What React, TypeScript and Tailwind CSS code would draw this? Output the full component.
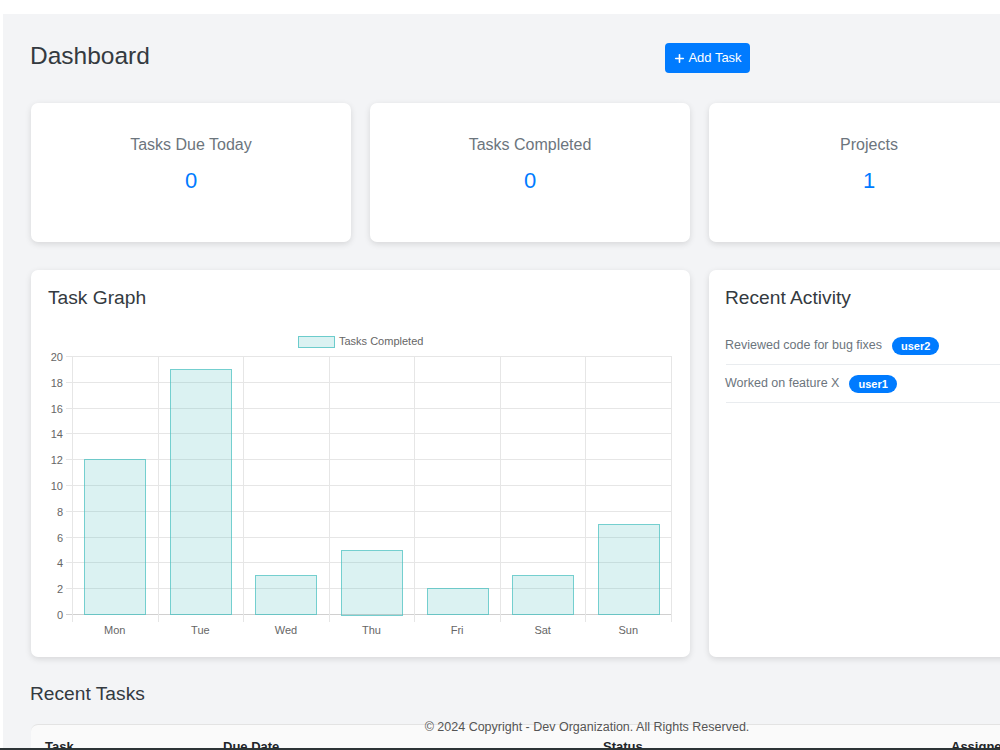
import { Plus } from "lucide-react";

const stats = [
  { title: "Tasks Due Today", value: 0 },
  { title: "Tasks Completed", value: 0 },
  { title: "Projects", value: 1 },
];

const days = ["Mon", "Tue", "Wed", "Thu", "Fri", "Sat", "Sun"];
const counts = [12, 19, 3, 5, 2, 3, 7];

const activity = [
  { text: "Reviewed code for bug fixes", user: "user2" },
  { text: "Worked on feature X", user: "user1" },
];

// plot box inside the svg
const left = 41;
const right = 640;
const top = 31;
const bottom = 289;
const step = (right - left) / 7;
const unit = (bottom - top) / 20;

const TaskChart = () => (
  <svg width="659" height="320" className="block">
    <rect x="267.5" y="11.5" width="36" height="11" fill="rgba(75,192,192,0.2)" stroke="rgba(75,192,192,0.8)" />
    <text x="308" y="20" fontSize="11" fill="#666">
      Tasks Completed
    </text>
    {Array.from({ length: 11 }).map((_, k) => {
      const y = Math.round(bottom - k * 2 * unit) + 0.5;
      return (
        <g key={k}>
          <line x1={left - 6} x2={right} y1={y} y2={y} stroke={k === 0 ? "#d0d0d0" : "#e6e6e6"} />
          <text x="32" y={y + 4} fontSize="11" fill="#666" textAnchor="end">
            {k * 2}
          </text>
        </g>
      );
    })}
    {Array.from({ length: 8 }).map((_, i) => {
      const x = Math.round(left + i * step) + 0.5;
      return <line key={i} x1={x} x2={x} y1={top} y2={bottom + 8} stroke="#e6e6e6" />;
    })}
    {counts.map((c, i) => {
      const cx = left + (i + 0.5) * step;
      const h = c * unit;
      return (
        <g key={days[i]}>
          <rect
            x={Math.round(cx - 30.5) + 0.5}
            y={Math.round(bottom - h) + 0.5}
            width="61"
            height={Math.round(h)}
            fill="rgba(75,192,192,0.2)"
            stroke="rgba(75,192,192,0.75)"
          />
          <text x={cx} y="309" fontSize="11" fill="#666" textAnchor="middle">
            {days[i]}
          </text>
        </g>
      );
    })}
  </svg>
);

export default function App() {
  return (
    <div className="relative h-[750px] w-[1000px] overflow-hidden bg-white font-['Liberation_Sans',Arial,sans-serif]">
      <div className="mt-[14px] ml-[3px] w-[1200px] min-h-[800px] bg-[#f3f4f6] pl-[28px] pt-[23px]">
        <div className="flex items-start">
          <h1 className="-ml-[1px] w-[635px] pt-[4px] text-[24.5px] leading-[29px] text-[#343a40]">Dashboard</h1>
          <button
            type="button"
            className="mt-[6px] flex h-[30px] w-[85px] items-center justify-center gap-[2px] rounded-[4px] bg-[#007bff] text-[13px] text-white"
          >
            <Plus size={13} strokeWidth={3} />
            Add Task
          </button>
        </div>

        <div className="mt-[30px] grid grid-cols-[320px_320px_320px] gap-[19px]">
          {stats.map((s) => (
            <div
              key={s.title}
              className="flex h-[139px] flex-col items-center rounded-[7px] bg-white pt-[32px] shadow-[0_2px_6px_rgba(0,0,0,0.12)]"
            >
              <p className="text-[16px] leading-[20px] text-[#6c757d]">{s.title}</p>
              <p className="mt-[13px] text-[22px] leading-[26px] text-[#007bff]">{s.value}</p>
            </div>
          ))}
        </div>

        <div className="mt-[28px] grid grid-cols-[659px_320px] gap-[19px]">
          <div className="h-[387px] rounded-[7px] bg-white pt-[16px] shadow-[0_2px_6px_rgba(0,0,0,0.12)]">
            <h2 className="px-[17px] text-[19.2px] leading-[23px] text-[#343a40]">Task Graph</h2>
            <div className="mt-[16px]">
              <TaskChart />
            </div>
          </div>
          <div className="h-[387px] rounded-[7px] bg-white px-[17px] pt-[16px] shadow-[0_2px_6px_rgba(0,0,0,0.12)]">
            <h2 className="-ml-[1px] text-[19.2px] leading-[23px] text-[#343a40]">Recent Activity</h2>
            <ul className="mt-[18px]">
              {activity.map((a) => (
                <li key={a.text} className="flex h-[38px] items-center gap-[10px] border-b border-[#e9ecef]">
                  <span className="-ml-[1px] text-[12.5px] text-[#6c757d]">{a.text}</span>
                  <span className="rounded-full bg-[#007bff] px-[9px] py-[3px] text-[11px] font-bold leading-[12px] text-white">
                    {a.user}
                  </span>
                </li>
              ))}
            </ul>
          </div>
        </div>

        <h2 className="-ml-[1px] mt-[25px] text-[19.2px] leading-[23px] text-[#343a40]">Recent Tasks</h2>
        <div className="mt-[19px] w-[998px] rounded-t-[7px] border-t border-[#e3e3e3] bg-[#fafafa] px-[14px] pt-[12px]">
          <div className="grid grid-cols-[178px_380px_348px_1fr] text-[13px] font-bold text-[#212529]">
            <span>Task</span>
            <span>Due Date</span>
            <span>Status</span>
            <span>Assigned To</span>
          </div>
        </div>
      </div>

      <footer className="absolute left-0 top-[719px] w-[1174px] text-center text-[12.5px] leading-[16px] text-[#555]">
        © 2024 Copyright - Dev Organization. All Rights Reserved.
      </footer>
      <div className="absolute bottom-0 left-0 h-[2px] w-full bg-[#2d3436]" />
    </div>
  );
}
